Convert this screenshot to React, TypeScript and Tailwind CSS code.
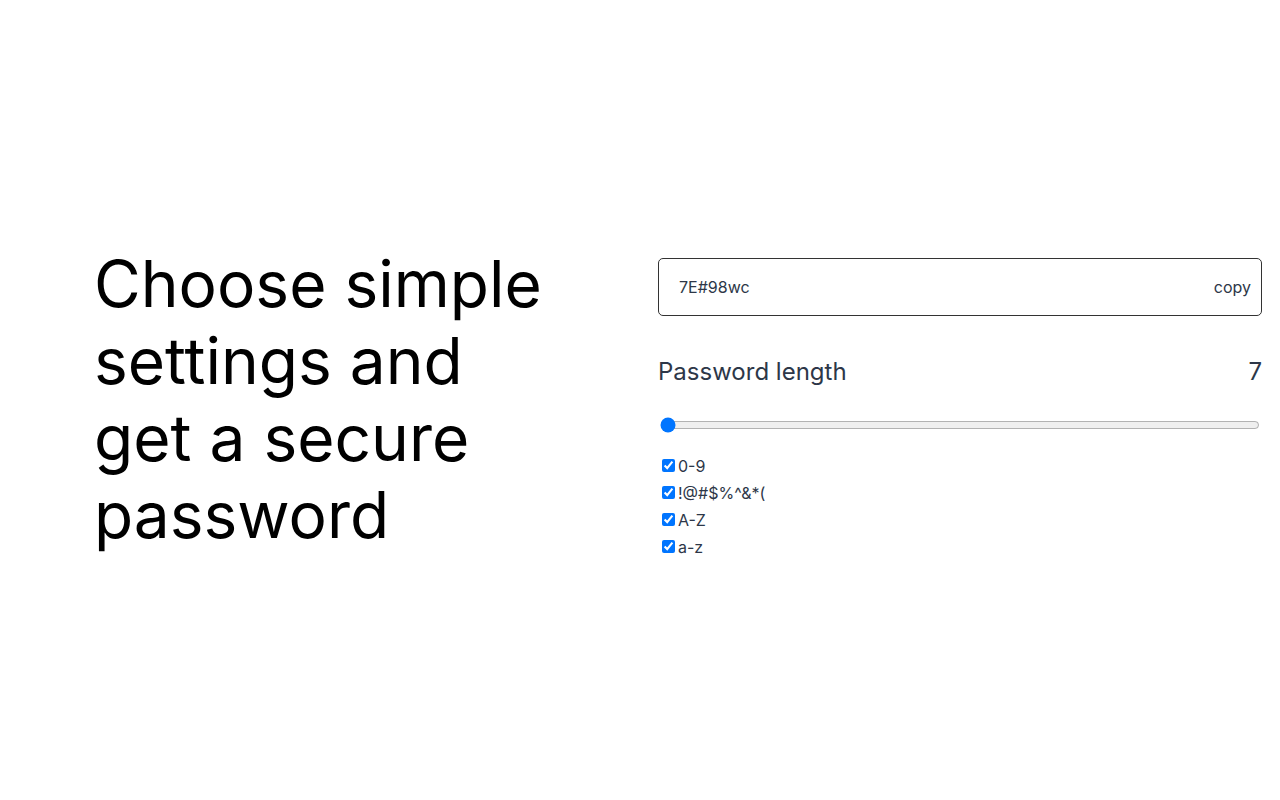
import { useState, type FC } from 'react';

const options = [
  { id: 'digits', label: '0-9' },
  { id: 'symbols', label: '!@#$%^&*(' },
  { id: 'upper', label: 'A-Z' },
  { id: 'lower', label: 'a-z' },
];

const App: FC = () => {
  const [length, setLength] = useState(7);
  const [checked, setChecked] = useState<Record<string, boolean>>({
    digits: true,
    symbols: true,
    upper: true,
    lower: true,
  });

  return (
    <div
      className="min-h-[800px] bg-white flex items-center pl-[94px] pr-[18px]"
      style={{ fontFamily: 'Inter, "Noto Sans", sans-serif' }}
    >
      <div className="flex-1">
        <h1 className="text-[64px] leading-[1.2] text-black font-normal max-w-[470px]">
          Choose simple settings and get a secure password
        </h1>
      </div>

      <div className="w-[604px] text-[#2d3748] mt-[18px]">
        <div className="h-[58px] border border-[#333] rounded-[5px] flex items-center justify-between pl-5 pr-[10px]">
          <span className="text-base">7E#98wc</span>
          <button className="text-base text-[#2d3748]">copy</button>
        </div>

        <div className="mt-10 flex items-center justify-between h-8">
          <span className="text-2xl">Password length</span>
          <span className="text-2xl">{length}</span>
        </div>

        <input
          type="range"
          min={7}
          max={40}
          value={length}
          onChange={(e) => setLength(Number(e.target.value))}
          className="block w-[600px] h-4 mx-[2px] mb-0 mt-[29px]"
        />

        <div className="mt-[19px]">
          {options.map((opt) => (
            <label key={opt.id} className="flex items-center h-[27px] text-base">
              <input
                type="checkbox"
                checked={checked[opt.id]}
                onChange={() => setChecked((prev) => ({ ...prev, [opt.id]: !prev[opt.id] }))}
                className="w-[13px] h-[13px] ml-1 mr-[3px]"
              />
              {opt.label}
            </label>
          ))}
        </div>
      </div>
    </div>
  );
};

export default App;
